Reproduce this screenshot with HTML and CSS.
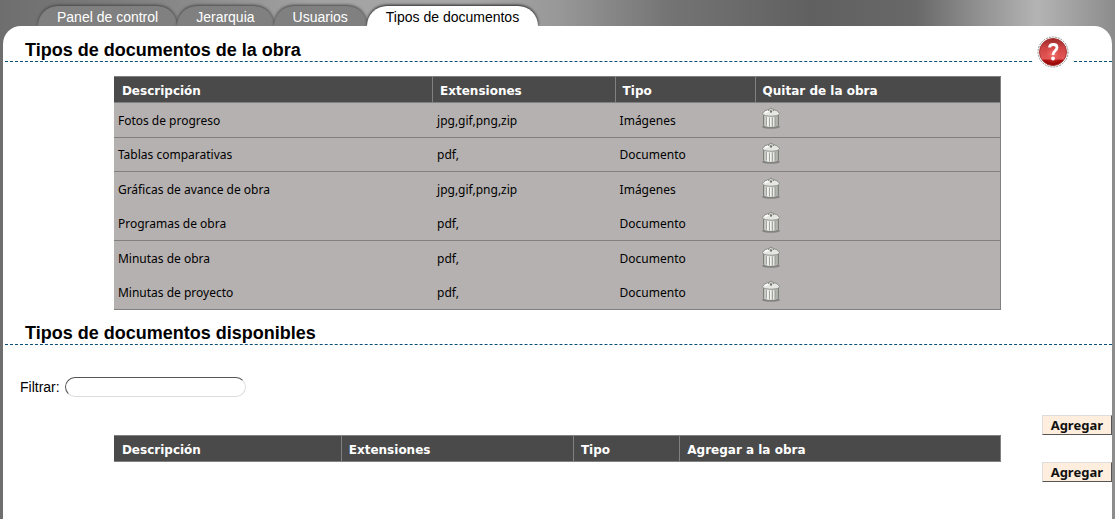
FILE: index.html
```html
<!DOCTYPE html>
<html lang="es">
<head>
<meta charset="utf-8">
<title>Tipos de documentos</title>
<link rel="stylesheet" href="styles.css">
</head>
<body>
<svg class="defs" aria-hidden="true">
  <defs>
    <linearGradient id="ball" x1="0" y1="0" x2="0" y2="1">
      <stop offset="0" stop-color="#9c2a2a"/>
      <stop offset=".35" stop-color="#cf4444"/>
      <stop offset=".76" stop-color="#e45a58"/>
      <stop offset=".8" stop-color="#a80c0c"/>
      <stop offset="1" stop-color="#8e0000"/>
    </linearGradient>
    <radialGradient id="glow" cx=".5" cy=".58" r=".42">
      <stop offset="0" stop-color="#ff8480" stop-opacity=".8"/>
      <stop offset="1" stop-color="#d03030" stop-opacity="0"/>
    </radialGradient>
    <linearGradient id="can" x1="0" y1="0" x2="1" y2="0">
      <stop offset="0" stop-color="#b4b6b0"/>
      <stop offset=".35" stop-color="#f0f1ee"/>
      <stop offset="1" stop-color="#a2a49e"/>
    </linearGradient>
    <symbol id="trash" viewBox="0 0 20 22">
      <ellipse cx="10" cy="20" rx="9" ry="1.8" fill="#000" opacity=".25"/>
      <path d="M2.500 7v11.500c0 2.600 15 2.600 15 0V7z" fill="url(#can)" stroke="#7c7e78"/>
      <path d="M5.500 10v8.500M8.500 10.500v9M11.500 10.500v9M14.500 10v8.500" stroke="#a2a49e" fill="none"/>
      <path d="M6.500 10v9M9.500 10.500v9M12.500 10.500v9" stroke="#fff" stroke-opacity=".6" fill="none"/>
      <path d="M1.500 6.500C3 3.500 6 2.500 10 2.500s7 1 8.500 4c.3 3.600-17.300 3.600-17 0z" fill="#e6e7e3" stroke="#8a8c86"/>
      <path d="M4 6c2-2 4-2.300 8-2.200" stroke="#fff" stroke-width="1.500" fill="none"/>
      <path d="M7.500 4c0-3.600 5-3.600 5 0" fill="#d2d4ce" stroke="#858781"/>
      <circle cx="10" cy="4.500" r="1.200" fill="#73756f"/>
    </symbol>
  </defs>
</svg>
<nav class="tabs">
  <a class="tab" href="#panel">Panel de control</a>
  <a class="tab" href="#jerarquia">Jerarquia</a>
  <a class="tab" href="#usuarios">Usuarios</a>
  <a class="tab active" href="#tipos" aria-current="page">Tipos de documentos</a>
</nav>
<main class="panel">
  <a class="help" href="#ayuda" aria-label="Ayuda">
    <svg width="32" height="32" viewBox="0 0 32 32">
      <circle cx="16" cy="16" r="15" fill="#fff" stroke="#8e8e8e" stroke-dasharray="2 1"/>
      <circle cx="16" cy="16" r="13.500" fill="url(#ball)" stroke="#a33"/>
      <circle cx="16" cy="16" r="13" fill="url(#glow)"/>
      <path d="M12.500 11.500c.3-4 7.500-4 7.500 0 0 3.500-4 3.200-4 7.500" fill="none" stroke="#fff" stroke-width="2.800"/>
      <circle cx="16" cy="22.500" r="1.900" fill="#fff"/>
    </svg>
  </a>
  <h2 class="title">Tipos de documentos de la obra</h2>
  <table class="grid assigned">
    <thead>
      <tr><th class="c1">Descripción</th><th class="c2">Extensiones</th><th class="c3">Tipo</th><th>Quitar de la obra</th></tr>
    </thead>
    <tbody>
      <tr><td>Fotos de progreso</td><td>jpg,gif,png,zip</td><td>Imágenes</td><td><button class="remove" type="button" aria-label="Quitar"><svg width="20" height="22"><use href="#trash"/></svg></button></td></tr>
      <tr><td>Tablas comparativas</td><td>pdf,</td><td>Documento</td><td><button class="remove" type="button" aria-label="Quitar"><svg width="20" height="22"><use href="#trash"/></svg></button></td></tr>
      <tr class="joined"><td>Gráficas de avance de obra</td><td>jpg,gif,png,zip</td><td>Imágenes</td><td><button class="remove" type="button" aria-label="Quitar"><svg width="20" height="22"><use href="#trash"/></svg></button></td></tr>
      <tr><td>Programas de obra</td><td>pdf,</td><td>Documento</td><td><button class="remove" type="button" aria-label="Quitar"><svg width="20" height="22"><use href="#trash"/></svg></button></td></tr>
      <tr class="joined"><td>Minutas de obra</td><td>pdf,</td><td>Documento</td><td><button class="remove" type="button" aria-label="Quitar"><svg width="20" height="22"><use href="#trash"/></svg></button></td></tr>
      <tr><td>Minutas de proyecto</td><td>pdf,</td><td>Documento</td><td><button class="remove" type="button" aria-label="Quitar"><svg width="20" height="22"><use href="#trash"/></svg></button></td></tr>
    </tbody>
  </table>
  <h2 class="title">Tipos de documentos disponibles</h2>
  <div class="filter">
    <label for="filtro">Filtrar:</label>
    <input id="filtro" type="text">
  </div>
  <div class="actions"><button class="add" type="button">Agregar</button></div>
  <table class="grid available">
    <thead>
      <tr><th class="c1">Descripción</th><th class="c2">Extensiones</th><th class="c3">Tipo</th><th>Agregar a la obra</th></tr>
    </thead>
  </table>
  <div class="actions"><button class="add" type="button">Agregar</button></div>
</main>
</body>
</html>
```
FILE: styles.css
```css
* { box-sizing: border-box; }

body {
  display: flex;
  flex-direction: column;
  min-height: 100vh;
  margin: 0;
  padding: 0 3px;
  background: linear-gradient(90deg, #6e6e6e 0%, #7c7c7c 10%, #a2a2a2 28%, #a8a8a8 42%, #989898 50%, #747474 60%, #606060 73%, #686868 82%, #929292 88%, #b4b4b4 93%, #8c8c8c 100%);
  font: 14px "Liberation Sans", Arial, sans-serif;
  color: #000;
}

.defs { position: absolute; width: 0; height: 0; }

.tabs {
  display: flex;
  height: 26px;
  padding: 6px 35px 0;
}

.tab {
  padding: 0 19px;
  border-radius: 20px 20px 0 0;
  background: #808080;
  box-shadow: 0 -1px 3px #444;
  color: #fff;
  line-height: 22px;
  text-decoration: none;
}

.tab.active {
  background: #fff;
  box-shadow: 0 -1px 3px #222;
  color: #000;
}

.panel {
  position: relative;
  flex: 1;
  padding-top: 14px;
  border-radius: 18px 18px 0 0;
  background: #fff;
}

.help {
  position: absolute;
  top: 10px;
  right: 39px;
  padding: 0 4px;
  background: #fff;
}

.help svg { display: block; }

.title {
  margin: 0 0 0 2px;
  padding-left: 20px;
  border-bottom: 1px dashed #0a4f78;
  font-size: 18px;
  line-height: 21px;
}

.grid {
  width: 80%;
  margin: 14px auto 13px;
  border: solid #808080;
  border-width: 1px 1px 0 0;
  border-spacing: 0;
  table-layout: fixed;
}

.grid th {
  height: 26px;
  padding: 2px 8px 0;
  border-bottom: 1px solid #808080;
  background: #4a4a4a;
  color: #fff;
  font: bold 12px "DejaVu Sans", Verdana, sans-serif;
  text-align: left;
}

.grid th + th {
  padding-left: 7px;
  border-left: 1px solid #808080;
}

.assigned .c1 { width: 35.9%; }
.assigned .c2 { width: 20.6%; }
.assigned .c3 { width: 15.8%; }
.available .c1 { width: 25.6%; }
.available .c2 { width: 26.2%; }
.available .c3 { width: 12%; }

.grid td {
  height: 34px;
  padding: 0 4px;
  border-bottom: 1px solid #808080;
  background: #b5b1b0;
  font: 12px "Noto Sans", Tahoma, sans-serif;
}

.grid td + td { padding-left: 5px; }
.grid tr:nth-child(odd) td { height: 35px; }
.grid .joined td { border-bottom: 0; }

.remove {
  display: block;
  margin: 0 0 4px 1px;
  padding: 0;
  border: 0;
  background: none;
}

.remove svg { display: block; }

.filter {
  display: flex;
  align-items: center;
  gap: 5px;
  margin: 32px 17px 18px;
}

.filter input {
  width: 181px;
  height: 20px;
  padding: 0 8px;
  border: 1px solid;
  border-color: #555 #ddd #ddd #555;
  border-radius: 10px;
  background: #fff;
}

.actions {
  display: flex;
  justify-content: flex-end;
}

.available { margin: 0 auto; }

.add {
  height: 20px;
  padding: 0 8px;
  border: 1px solid;
  border-color: #ddd #555 #555 #ddd;
  background: #ffeedd;
  color: #111;
  font: bold 13px "Noto Sans", sans-serif;
  line-height: 18px;
}
```
